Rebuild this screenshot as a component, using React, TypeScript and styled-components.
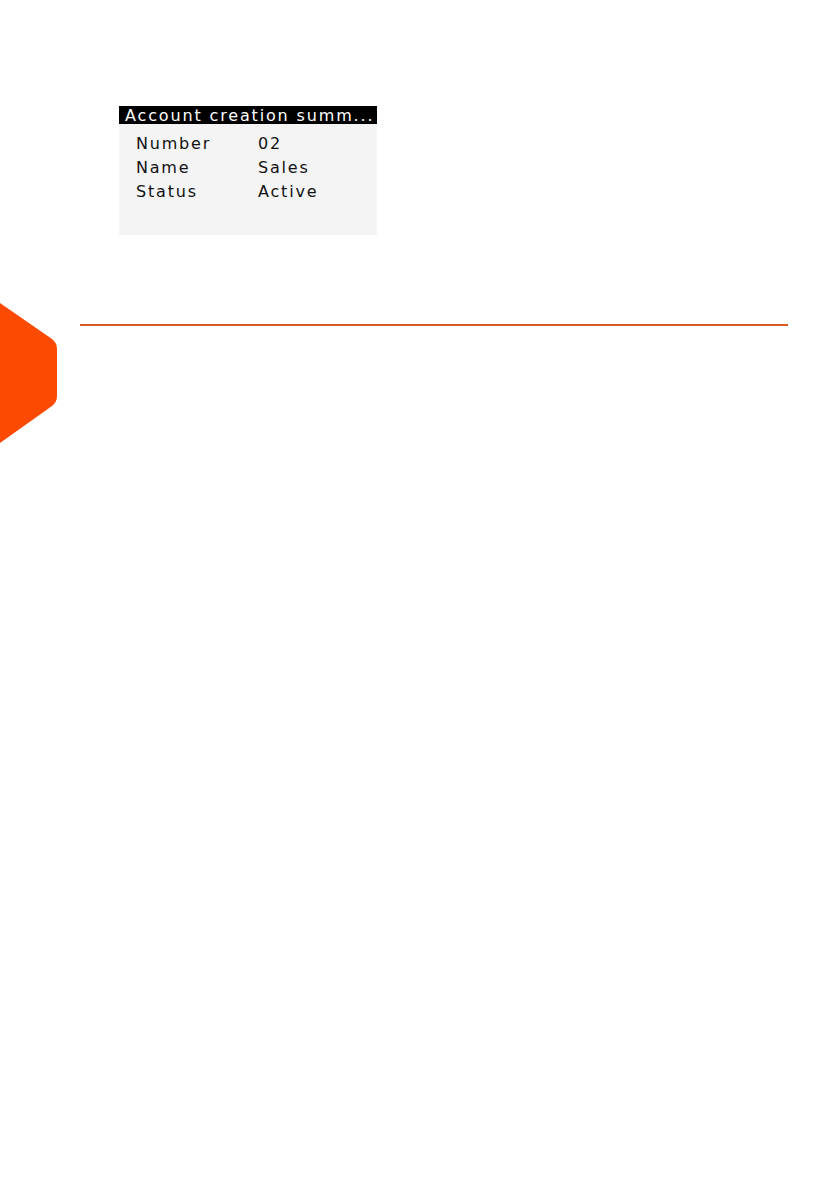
import styled, { createGlobalStyle } from "styled-components";

const Global = createGlobalStyle`
  html, body {
    margin: 0;
    padding: 0;
    background: #ffffff;
  }
`;

const Page = styled.div`
  position: relative;
  width: 839px;
  height: 1191px;
  overflow: hidden;
  background: #ffffff;
`;

const Content = styled.div`
  display: flex;
  flex-direction: column;
  padding-top: 106px;
  padding-left: 119px;
`;

const Screen = styled.div`
  width: 258px;
  height: 129px;
  background: #f4f4f4;
  display: flex;
  flex-direction: column;
`;

const ScreenTitle = styled.div`
  height: 18px;
  background: #000000;
  color: #ffffff;
  font-family: "DejaVu Sans", sans-serif;
  font-size: 16px;
  line-height: 19px;
  letter-spacing: 1.85px;
  padding-left: 6px;
  white-space: nowrap;
  overflow: hidden;
`;

const Rows = styled.div`
  display: flex;
  flex-direction: column;
  padding: 8px 0 0 17px;
`;

const Row = styled.div`
  display: grid;
  grid-template-columns: 122px 1fr;
  height: 24px;
  font-family: "DejaVu Sans", sans-serif;
  font-size: 16px;
  line-height: 24px;
  letter-spacing: 1.8px;
  color: #111111;
`;

const Divider = styled.div`
  margin: 89px 0 0 80px;
  width: 708px;
  height: 2px;
  background: #d85a20;
`;

const SideTab = styled.svg`
  position: absolute;
  left: 0;
  top: 300px;
`;

const rows = [
  ["Number", "02"],
  ["Name", "Sales"],
  ["Status", "Active"],
];

export default function App() {
  return (
    <Page>
      <Global />
      <Content>
        <Screen>
          <ScreenTitle>Account creation summ...</ScreenTitle>
          <Rows>
            {rows.map(([label, value]) => (
              <Row key={label}>
                <span>{label}</span>
                <span>{value}</span>
              </Row>
            ))}
          </Rows>
        </Screen>
      </Content>
      <Divider />
      <SideTab width="60" height="146" viewBox="0 0 60 146">
        <path
          d="M0 3 L52 39 Q57 43 57 49 L57 96 Q57 102 52 106 L0 143 Z"
          fill="#fd4a02"
        />
      </SideTab>
    </Page>
  );
}
